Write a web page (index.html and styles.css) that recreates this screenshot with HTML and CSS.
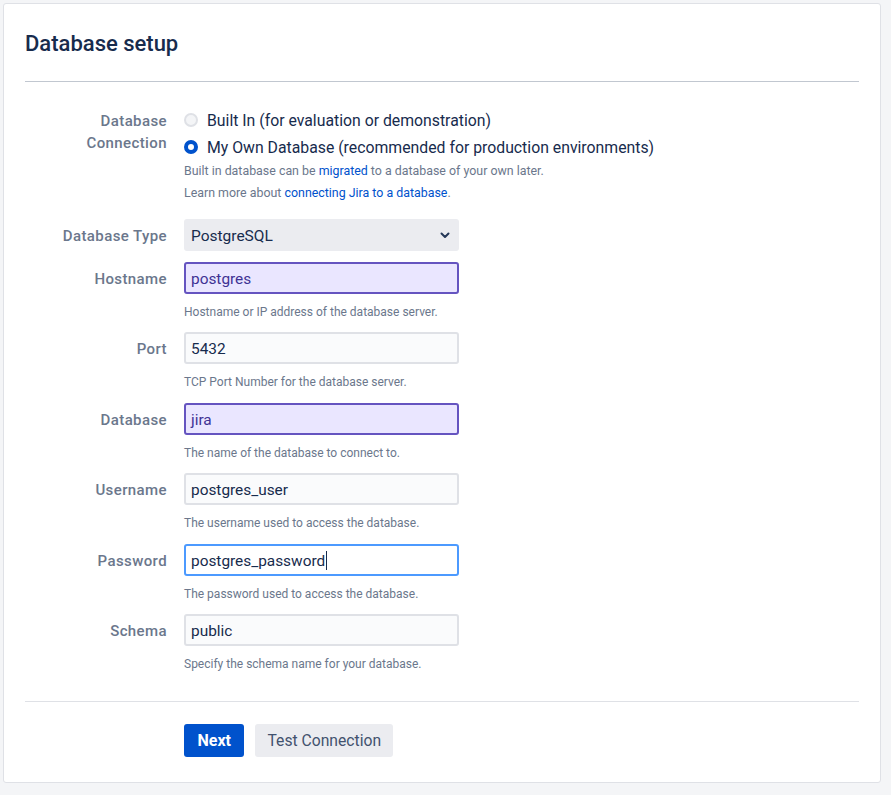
FILE: index.html
```html
<!DOCTYPE html>
<html lang="en">
<head>
<meta charset="utf-8">
<title>Database setup</title>
<link rel="stylesheet" href="styles.css">
</head>
<body>
<main class="card">
  <header class="card-header">
    <h1 class="title">Database setup</h1>
  </header>
  <form class="form">
    <div class="row row-connection">
      <div class="label label-multi">Database<br>Connection</div>
      <div class="control">
        <div class="radio-row"><span class="radio"></span><span class="radio-text">Built In (for evaluation or demonstration)</span></div>
        <div class="radio-row"><span class="radio checked"></span><span class="radio-text">My Own Database (recommended for production environments)</span></div>
        <div class="note">Built in database can be <a href="#">migrated</a> to a database of your own later.</div>
        <div class="note">Learn more about <a href="#">connecting Jira to a database</a>.</div>
      </div>
    </div>
    <div class="row row-select">
      <div class="label">Database Type</div>
      <div class="control">
        <div class="select"><span>PostgreSQL</span>
          <svg class="chev" width="10" height="7" viewBox="0 0 10 7"><path d="M1.5 1.5 L5 5 L8.5 1.5" fill="none" stroke="#253858" stroke-width="2" stroke-linecap="round" stroke-linejoin="round"/></svg>
        </div>
      </div>
    </div>
    <div class="row">
      <div class="label">Hostname</div>
      <div class="control">
        <div class="input autofill">postgres</div>
        <div class="help">Hostname or IP address of the database server.</div>
      </div>
    </div>
    <div class="row">
      <div class="label">Port</div>
      <div class="control">
        <div class="input">5432</div>
        <div class="help">TCP Port Number for the database server.</div>
      </div>
    </div>
    <div class="row">
      <div class="label">Database</div>
      <div class="control">
        <div class="input autofill">jira</div>
        <div class="help">The name of the database to connect to.</div>
      </div>
    </div>
    <div class="row">
      <div class="label">Username</div>
      <div class="control">
        <div class="input">postgres_user</div>
        <div class="help">The username used to access the database.</div>
      </div>
    </div>
    <div class="row">
      <div class="label">Password</div>
      <div class="control">
        <div class="input focused">postgres_password<span class="caret"></span></div>
        <div class="help">The password used to access the database.</div>
      </div>
    </div>
    <div class="row row-last">
      <div class="label">Schema</div>
      <div class="control">
        <div class="input">public</div>
        <div class="help">Specify the schema name for your database.</div>
      </div>
    </div>
    <div class="actions">
      <button type="button" class="btn btn-primary">Next</button>
      <button type="button" class="btn btn-default">Test Connection</button>
    </div>
  </form>
</main>
</body>
</html>
```
FILE: styles.css
```css
* { box-sizing: border-box; }
html, body { margin: 0; }
body {
  background: #f4f5f7;
  padding: 3px 10px 12px 3px;
  font-family: Roboto, "Liberation Sans", sans-serif;
  color: #172b4d;
}
.card {
  background: #fff;
  border: 1px solid #dfe1e6;
  border-radius: 3px;
  padding: 0 21px 25px;
}
.card-header {
  padding: 25px 0 22px;
  border-bottom: 1px solid #c1c7d0;
}
.title {
  margin: 0;
  font-size: 22px;
  line-height: 30px;
  font-weight: 500;
  color: #172b4d;
}
.form { margin: 0; }
.row {
  display: grid;
  grid-template-columns: 142px 275px;
  column-gap: 17px;
  margin-bottom: 9.4px;
}
.row-connection { padding-top: 25px; margin-bottom: 16px; }
.row-select { margin-bottom: 11px; }
.row-last { margin-bottom: 0; padding-bottom: 26px; border-bottom: 1px solid #dfe1e6; }
.label {
  text-align: right;
  font-size: 15px;
  font-weight: 500;
  letter-spacing: 0.4px;
  color: #6b778c;
  line-height: 29px;
  padding-top: 3px;
}
.label-multi { line-height: 22px; padding-top: 3px; }
.control { min-width: 0; }
.row-connection .control { grid-column: 2; width: 620px; }
.radio-row {
  display: flex;
  align-items: center;
  height: 26px;
  gap: 9px;
}
.radio-row + .radio-row { margin-top: 1px; }
.radio {
  width: 14px;
  height: 14px;
  border-radius: 50%;
  border: 2px solid #dfe1e6;
  background: #f4f5f7;
  flex: none;
}
.radio.checked {
  border: 4.5px solid #0052cc;
  background: #fff;
}
.radio-text { font-size: 15.8px; color: #172b4d; white-space: nowrap; }
.note {
  font-size: 12.4px;
  line-height: 21.5px;
  color: #6b778c;
}
.note a { color: #0052cc; text-decoration: none; }
.select {
  height: 32px;
  background: #ebecf0;
  border-radius: 3px;
  display: flex;
  align-items: center;
  justify-content: space-between;
  padding: 2px 9px 0 7px;
  font-size: 15.5px;
  color: #172b4d;
}
.chev { display: block; margin-top: -1px; }
.input {
  height: 32px;
  border: 2px solid #dfe1e6;
  background: #fafbfc;
  border-radius: 3px;
  padding: 2px 5px 0;
  font-size: 15.4px;
  line-height: 26px;
  color: #172b4d;
  white-space: nowrap;
}
.input.autofill {
  background: #eae6ff;
  border-color: #6554c0;
  color: #403294;
}
.input.focused {
  background: #fff;
  border-color: #4c9aff;
}
.caret {
  display: inline-block;
  width: 1px;
  height: 19px;
  background: #172b4d;
  vertical-align: -4px;
  margin-left: 1px;
}
.help {
  margin-top: 7px;
  font-size: 12px;
  line-height: 22px;
  color: #6b778c;
}
.actions {
  padding: 22px 0 0 159px;
  display: flex;
  gap: 11px;
}
.btn {
  height: 33px;
  border: 0;
  border-radius: 3px;
  padding: 0 12px;
  font-family: inherit;
  font-size: 15.7px;
  cursor: pointer;
}
.btn-primary { background: #0052cc; color: #fff; font-weight: 700; font-size: 16px; padding: 0 13.5px; }
.btn-default { background: #ebecf0; color: #42526e; font-weight: 400; }
```
